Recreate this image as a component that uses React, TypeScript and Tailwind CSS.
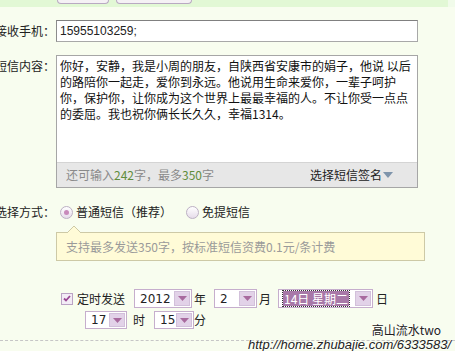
import React from "react";

const Sel = ({ w, value, hl }: { w: string; value: string; hl?: boolean }) => (
  <div className={`${w} h-full border border-[#c6aecd] bg-white flex items-stretch`}>
    <div className="flex-1 flex items-center pl-[4px] font-['DejaVu_Sans','Noto_Sans_CJK_SC',sans-serif] text-[12px] text-[#222] overflow-hidden whitespace-nowrap">
      {hl ? (
        <span className="bg-[#a878a8] text-white px-[1px] leading-[15px] outline outline-1 outline-dotted outline-[#333] font-['Noto_Sans_CJK_SC',sans-serif] text-[12px]">
          14日 星期二
        </span>
      ) : (
        <span className="pl-[1px]">{value}</span>
      )}
    </div>
    <div className="w-[16px] my-[1px] mr-[1px] bg-[#e2d2e8] border border-[#d2c0da] flex items-center justify-center">
      <svg width="9" height="5" viewBox="0 0 9 5">
        <path d="M0 0 H9 L4.5 5 Z" fill="#a86a9e" />
      </svg>
    </div>
  </div>
);

const Radio = ({ checked }: { checked?: boolean }) => (
  <div className="w-[13px] h-[13px] rounded-full border border-[#bcb0c4] bg-gradient-to-b from-white to-[#e6dcea] flex items-center justify-center">
    {checked && <div className="w-[5px] h-[5px] rounded-full bg-[#c88abb]" />}
  </div>
);

export default function App() {
  return (
    <div className="w-[455px] h-[351px] overflow-hidden bg-[#f8fdef] relative font-['Noto_Sans_CJK_SC',sans-serif] text-[12px] text-[#222] leading-none">
      {/* top band */}
      <div className="flex">
        <div className="h-[7px] w-[448px] bg-[#e2f8d5] flex items-start">
          <div className="ml-[57px] w-[52px] h-[4px] border border-t-0 border-[#b9a9c2] rounded-b-[5px] bg-[#f5f1f5]" />
          <div className="ml-[7px] w-[76px] h-[4px] border border-t-0 border-[#b9a9c2] rounded-b-[5px] bg-[#f5f1f5]" />
        </div>
        <div className="h-[7px] flex-1 bg-[#f1fbea]" />
      </div>

      {/* phone */}
      <div className="mt-[13px] flex items-center h-[22px]">
        <div className="w-[55px] flex justify-end shrink-0">
          <span className="whitespace-nowrap">接收手机：</span>
        </div>
        <div className="ml-[1px] w-[362px] h-[22px] bg-white border border-[#a8a8a8] border-t-[#808080] border-l-[#8c8c8c] flex items-center pl-[3px] font-['Liberation_Sans',sans-serif] text-[12px] text-[#222]">
          15955103259;
        </div>
      </div>

      {/* content */}
      <div className="mt-[13px] flex items-start">
        <div className="w-[55px] flex justify-end shrink-0 pt-[3px] leading-[16px]">
          <span className="whitespace-nowrap">短信内容：</span>
        </div>
        <div className="ml-[1px] w-[362px] h-[133px] border border-[#a6a6a6] bg-white flex flex-col">
          <div className="flex-1 pl-[3px] pt-[2px] leading-[16px] whitespace-nowrap text-[#111]">
            <div>你好，安静，我是小周的朋友，自陕西省安康市的娟子，他说 以后</div>
            <div>的路陪你一起走，爱你到永远。他说用生命来爱你，一辈子呵护</div>
            <div>你，保护你，让你成为这个世界上最最幸福的人。不让你受一点点</div>
            <div>的委屈。我也祝你俩长长久久，幸福1314。</div>
          </div>
          <div className="h-[25px] bg-[#e7e7e7] border-t border-[#d4d4d4] flex items-center justify-between pl-[9px] pr-[24px]">
            <span className="text-[#8a8a8a]">
              还可输入<span className="text-[#5f8d3c]">242</span>字，最多<span className="text-[#5f8d3c]">350</span>字
            </span>
            <span className="flex items-center text-[#222]">
              选择短信签名
              <svg width="10" height="6" viewBox="0 0 10 6" className="ml-[1px]">
                <path d="M0 0 H10 L5 6 Z" fill="#7e94ab" />
              </svg>
            </span>
          </div>
        </div>
      </div>

      {/* radio */}
      <div className="mt-[15px] h-[18px] flex items-center">
        <div className="w-[55px] flex justify-end shrink-0">
          <span className="whitespace-nowrap">选择方式：</span>
        </div>
        <div className="ml-[5px]"><Radio checked /></div>
        <span className="ml-[3px]">普通短信（推荐）</span>
        <div className="ml-[14px]"><Radio /></div>
        <span className="ml-[3px]">免提短信</span>
      </div>

      {/* tooltip */}
      <div className="mt-[11px] relative ml-[56px] w-[369px] h-[29px] border border-[#cdc9a6] bg-[#fffbd7] flex items-center pl-[9px] text-[#9a9a9a]">
        支持最多发送350字，按标准短信资费0.1元/条计费
        <svg width="14" height="8" viewBox="0 0 14 8" className="absolute left-[10px] top-[-8px]">
          <path d="M0 8 L7 1 L14 8" fill="#fffbd7" stroke="#cdc9a6" strokeWidth="1" />
        </svg>
      </div>

      {/* schedule row 1 */}
      <div className="mt-[28px] h-[19px] flex items-center">
        <div className="ml-[61px] w-[12px] h-[12px] border border-[#bba3c4] bg-[#f3ecf6] flex items-center justify-center">
          <svg width="8" height="7" viewBox="0 0 8 7">
            <path d="M1 3.5 L3 5.5 L7 1" fill="none" stroke="#9a4692" strokeWidth="1.8" />
          </svg>
        </div>
        <span className="ml-[4px]">定时发送</span>
        <div className="ml-[9px] h-full flex"><Sel w="w-[58px]" value="2012" /></div>
        <span className="ml-[2px]">年</span>
        <div className="ml-[8px] h-full flex"><Sel w="w-[43px]" value="2" /></div>
        <span className="ml-[2px]">月</span>
        <div className="ml-[7px] h-full flex"><Sel w="w-[95px]" value="" hl /></div>
        <span className="ml-[3px]">日</span>
      </div>

      {/* schedule row 2 */}
      <div className="mt-[3px] h-[18px] flex items-center">
        <div className="ml-[85px] h-full flex"><Sel w="w-[42px]" value="17" /></div>
        <span className="ml-[6px]">时</span>
        <div className="ml-[9px] h-full flex"><Sel w="w-[40px]" value="15" /></div>
        <span className="ml-[0px]">分</span>
      </div>

      {/* dashed line */}
      <div className="mt-[11px] border-t border-dashed border-[#c6c6c6]" />

      {/* watermark */}
      <div className="absolute right-[14px] top-[324px] text-[12px] text-[#222] [text-shadow:0_0_2px_#fff,0_0_2px_#fff]">
        高山流水two
      </div>
      <div className="absolute left-[248px] top-[338px] font-['Liberation_Sans',sans-serif] italic text-[13px] text-[#222] whitespace-nowrap [text-shadow:0_0_2px_#fff,0_0_2px_#fff]">
        http://home.zhubajie.com/6333583/
      </div>
    </div>
  );
}
